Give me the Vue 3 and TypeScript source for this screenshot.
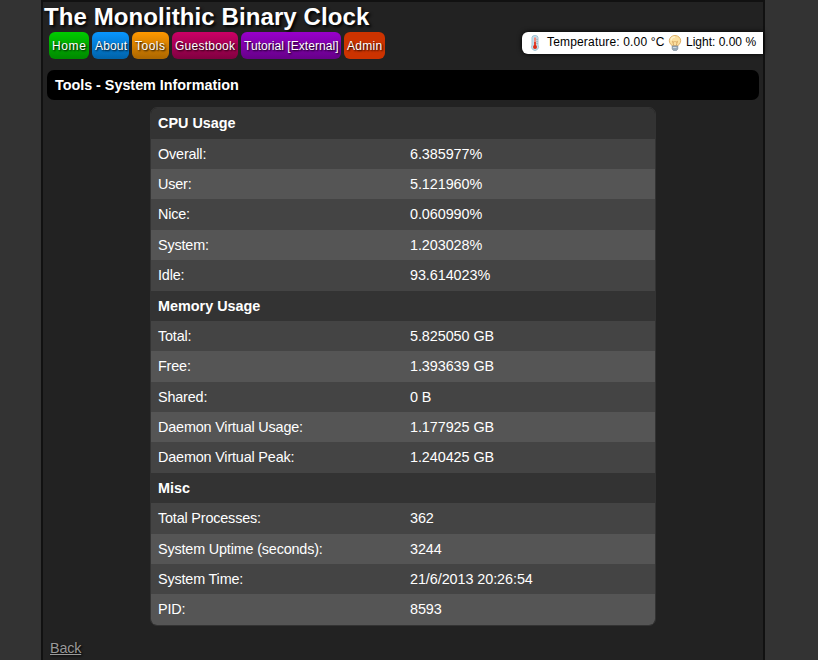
<script setup lang="ts">
interface NavItem { label: string; tone: string; width: number }
interface Section { title: string; rows: [string, string][] }

const nav: NavItem[] = [
  { label: 'Home', tone: 'green', width: 40 },
  { label: 'About', tone: 'blue', width: 37 },
  { label: 'Tools', tone: 'orange', width: 37 },
  { label: 'Guestbook', tone: 'pink', width: 66 },
  { label: 'Tutorial [External]', tone: 'purple', width: 100 },
  { label: 'Admin', tone: 'red', width: 41 },
]

const sections: Section[] = [
  {
    title: 'CPU Usage',
    rows: [
      ['Overall:', '6.385977%'],
      ['User:', '5.121960%'],
      ['Nice:', '0.060990%'],
      ['System:', '1.203028%'],
      ['Idle:', '93.614023%'],
    ],
  },
  {
    title: 'Memory Usage',
    rows: [
      ['Total:', '5.825050 GB'],
      ['Free:', '1.393639 GB'],
      ['Shared:', '0 B'],
      ['Daemon Virtual Usage:', '1.177925 GB'],
      ['Daemon Virtual Peak:', '1.240425 GB'],
    ],
  },
  {
    title: 'Misc',
    rows: [
      ['Total Processes:', '362'],
      ['System Uptime (seconds):', '3244'],
      ['System Time:', '21/6/2013 20:26:54'],
      ['PID:', '8593'],
    ],
  },
]
</script>

<template>
  <div class="page">
    <h1>The Monolithic Binary Clock</h1>
    <div class="bar">
      <nav>
        <a v-for="n in nav" :key="n.label" :class="n.tone" :style="{ width: n.width + 'px' }">{{ n.label }}</a>
      </nav>
      <div class="sensors">
        <svg class="icon thermo" width="16" height="16" viewBox="0 0 16 16">
          <path d="M5 2.5a3 2 0 0 1 6 0v7.6a3.5 3.5 0 1 1-6 0z" fill="#c5e0ee" stroke="#a3c4d4" />
          <path d="M7 2.5h2.2V11H7z" fill="#f58a7c" />
          <path d="M7 7h2v4H7z" fill="#e2402d" />
          <circle cx="8" cy="12" r="2" fill="#dc2c18" />
          <path d="M9.5 4.5h1M9.5 6.5h1M9.5 8.5h1" stroke="#7793a0" stroke-width=".7" />
        </svg>
        <span class="temp">Temperature: 0.00 °C</span>
        <svg class="icon bulb" width="16" height="16" viewBox="0 0 16 16">
          <path d="M5 10.8C4.8 9.6 2.3 8.8 2.3 5.8a5.7 5.3 0 0 1 11.4 0c0 3-2.5 3.8-2.7 5z" fill="#fce0a0" stroke="#dfb067" />
          <path d="M4 5.5A4 3.8 0 0 1 8 2" fill="none" stroke="#fff2cc" stroke-width="1.4" />
          <path d="M6.8 10.5 5.5 6.3 7 7.3l1-1 1 1 1.5-1-1.3 4.2" fill="none" stroke="#d2a05a" stroke-width=".8" />
          <path d="M5.2 11h5.6v3L9.5 15.6h-3L5.2 14z" fill="#98aab9" stroke="#7b8b99" stroke-width=".7" />
          <path d="M6 12.5h3.5" stroke="#d0dae2" />
        </svg>
        <span>Light: 0.00 %</span>
      </div>
    </div>
    <h2>Tools - System Information</h2>
    <div class="table">
      <template v-for="s in sections" :key="s.title">
        <div class="row head">{{ s.title }}</div>
        <div v-for="(r, i) in s.rows" :key="r[0]" class="row" :class="{ alt: i % 2 === 1 }">
          <span>{{ r[0] }}</span><span>{{ r[1] }}</span>
        </div>
      </template>
    </div>
    <a class="back">Back</a>
  </div>
</template>

<style>
body { background: #333; overflow: hidden; }
</style>

<style scoped>
.page {
  box-sizing: border-box;
  width: 724px;
  height: 660px;
  margin-left: 41px;
  border: 2px solid #111;
  border-bottom: 0;
  background: #222;
  color: #fff;
  font-family: "Liberation Sans", Arial, sans-serif;
  font-size: 14.4px;
  text-shadow: 1px 1px 2px #000;
}
h1 { margin: 0; padding-left: 1px; height: 30px; font-size: 24px; line-height: 30px; letter-spacing: .1px; text-shadow: 2px 2px 3px #000; }
.bar { display: flex; justify-content: space-between; height: 27px; padding-left: 6px; }
nav { display: flex; gap: 3px; }
nav a {
  box-sizing: border-box;
  height: 27px;
  padding-left: 3px;
  border-radius: 6px;
  font-size: 12px;
  line-height: 28px;
  letter-spacing: .15px;
  white-space: nowrap;
}
.green { background: linear-gradient(#0c0, #080); letter-spacing: .6px; }
.blue { background: linear-gradient(#0896ff, #0062a8); }
.orange { background: linear-gradient(#f90, #a60); letter-spacing: .5px; }
.pink { background: linear-gradient(#cc0066, #800040); letter-spacing: .25px; }
.purple { background: linear-gradient(#90c, #608); letter-spacing: .05px; }
.red { background: #c30; letter-spacing: .3px; }
.sensors {
  box-sizing: border-box;
  display: flex;
  width: 241px;
  height: 22px;
  padding-left: 5px;
  border-radius: 6px 0 0 6px;
  background: #fff;
  box-shadow: 0 0 5px #000;
  color: #000;
  font-size: 12px;
  line-height: 21px;
  text-shadow: none;
  white-space: nowrap;
}
.icon { flex: none; margin-top: 3px; }
.temp { width: 118px; margin-left: 4px; letter-spacing: .17px; }
.bulb { margin-left: 2px; margin-right: 3px; }
h2 {
  width: 704px;
  height: 30px;
  margin: 11px 0 0 4px;
  padding-left: 8px;
  border-radius: 7px;
  background: #000;
  font-size: 14.4px;
  line-height: 30px;
  letter-spacing: -.03px;
}
.table {
  width: 504px;
  height: 517px;
  margin: 7px 0 0 107px;
  overflow: hidden;
  border: 1px solid #333;
  border-radius: 7px;
  text-shadow: none;
}
.row { display: flex; height: 30.375px; padding-left: 7px; background: #444; line-height: 30px; }
.row span { letter-spacing: -.07px; }
.row span:first-child { width: 252px; letter-spacing: -.17px; }
.alt { background: #555; }
.head { background: #333; font-weight: bold; }
.head:first-child { height: 30.63px; }
.back { display: inline-block; margin: 13px 0 0 7px; color: #999; line-height: 18px; letter-spacing: -.2px; text-decoration: underline; }
</style>
